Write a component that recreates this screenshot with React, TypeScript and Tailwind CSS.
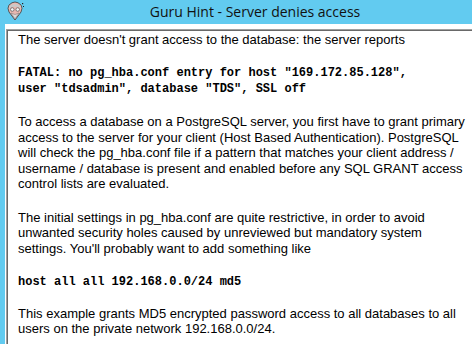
import React from "react";

function GuruIcon() {
  return (
    <svg width="20" height="20" viewBox="0 0 20 20" className="block">
      <path d="M10 19 L4 11 Q2 7 4 4 Q7 1 10 1 Q13 1 16 4 Q18 7 16 11 Z" fill="#e8b8b0" stroke="#3a3a3a" strokeWidth="0.8" />
      <path d="M4 5 Q10 1 16 5 L15 7 Q10 4 5 7 Z" fill="#c9c9c9" />
      <circle cx="7.3" cy="8.5" r="1.8" fill="#f4f4f4" stroke="#555" strokeWidth="0.7" />
      <circle cx="12.7" cy="8.5" r="1.8" fill="#f4f4f4" stroke="#555" strokeWidth="0.7" />
      <path d="M6 12 Q10 15 14 12 L10 18 Z" fill="#d8d8d8" stroke="#777" strokeWidth="0.5" />
      <rect x="17" y="2" width="1.2" height="1.2" fill="#222" />
      <rect x="18" y="5" width="1" height="1" fill="#222" />
    </svg>
  );
}

export default function App() {
  const sans = { fontFamily: '"Liberation Sans", Arial, sans-serif' };
  const mono = { fontFamily: '"Liberation Mono", "Courier New", monospace' };
  return (
    <div className="w-[472px] h-[344px] overflow-hidden bg-[#62cbf0] flex flex-col">
      <div className="h-[24px] flex items-center relative shrink-0">
        <div className="absolute left-[5px] top-[1px]">
          <GuruIcon />
        </div>
        <div
          className="w-[510px] shrink-0 text-center text-[14px] text-[#111] leading-[24px]"
          style={{ fontFamily: '"Open Sans", "Noto Sans", sans-serif' }}
        >
          Guru Hint - Server denies access
        </div>
      </div>
      <div className="flex-1 flex pl-[5px] min-h-0">
        <div className="flex-1 bg-white pt-[5px] pl-[1px] flex flex-col min-h-0">
          <div className="flex-1 border-t border-l border-[#a0a0a0] min-h-0">
            <div className="h-full border-t border-l border-[#696969] bg-white pl-[10px] pt-[1px] text-[13px] text-black leading-[15.5px]" style={sans}>
              <p>The server doesn't grant access to the database: the server reports</p>
              <p className="mt-[17.5px] font-bold text-[12px] leading-[16px]" style={mono}>
                FATAL: no pg_hba.conf entry for host "169.172.85.128",
                <br />
                user "tdsadmin", database "TDS", SSL off
              </p>
              <p className="mt-[17px]">
                To access a database on a PostgreSQL server, you first have to grant primary
                <br />
                access to the server for your client (Host Based Authentication). PostgreSQL
                <br />
                will check the pg_hba.conf file if a pattern that matches your client address /
                <br />
                username / database is present and enabled before any SQL GRANT access
                <br />
                control lists are evaluated.
              </p>
              <p className="mt-[18px]">
                The initial settings in pg_hba.conf are quite restrictive, in order to avoid
                <br />
                unwanted security holes caused by unreviewed but mandatory system
                <br />
                settings. You'll probably want to add something like
              </p>
              <p className="mt-[17.5px] font-bold text-[12px] leading-[16px]" style={mono}>
                host all all 192.168.0.0/24 md5
              </p>
              <p className="mt-[16px]">
                This example grants MD5 encrypted password access to all databases to all
                <br />
                users on the private network 192.168.0.0/24.
              </p>
            </div>
          </div>
        </div>
      </div>
    </div>
  );
}
